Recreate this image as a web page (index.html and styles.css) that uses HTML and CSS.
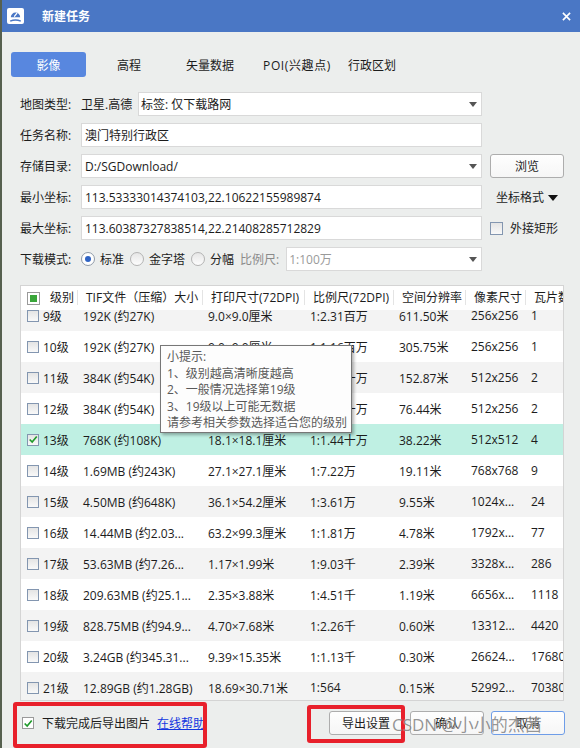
FILE: index.html
```html
<!DOCTYPE html>
<html>
<head>
  <meta charset="utf-8">
  <title>新建任务</title>
  <link rel="stylesheet" href="styles.css">
</head>
<body>
  <div class="window">
    <div class="titlebar">
      <svg class="app-icon" viewBox="0 0 17 16">
        <rect x="0" y="0" width="17" height="16" rx="2" fill="#fff"/>
        <path d="M3.8 9.2 a4.7 4.7 0 0 1 9.4 0 z" fill="#4a77c5"/>
        <path d="M7.6 8.2 L9.8 5.4" stroke="#fff" stroke-width="1.3" stroke-linecap="round"/>
        <path d="M3.2 13.2 Q8.5 10.6 13.8 13.2" stroke="#4a77c5" stroke-width="1.5" fill="none"/>
      </svg>
      <span class="title">新建任务</span>
      <svg class="close" viewBox="0 0 10 10">
        <path d="M1 1 L9 9 M9 1 L1 9" stroke="#fff" stroke-width="1.8"/>
      </svg>
    </div>

    <div class="tabs">
      <div class="tab active">影像</div>
      <div class="tab">高程</div>
      <div class="tab">矢量数据</div>
      <div class="tab poi">POI(兴趣点)</div>
      <div class="tab">行政区划</div>
    </div>

    <div class="form">
      <label>地图类型:</label>
      <div class="pair">
        <span class="map-type">卫星.高德</span>
        <div class="box select tight">标签: 仅下载路网<i class="caret"></i></div>
      </div>
      <div></div>

      <label>任务名称:</label>
      <div class="box">澳门特别行政区</div>
      <div></div>

      <label>存储目录:</label>
      <div class="box select">D:/SGDownload/<i class="caret"></i></div>
      <div class="side"><button class="btn">浏览</button></div>

      <label>最小坐标:</label>
      <div class="box">113.53333014374103,22.10622155989874</div>
      <div class="side"><span class="coord-fmt">坐标格式<i class="caret dark"></i></span></div>

      <label>最大坐标:</label>
      <div class="box">113.60387327838514,22.21408285712829</div>
      <div class="side"><span class="check"></span><span class="check-label">外接矩形</span></div>

      <label>下载模式:</label>
      <div class="pair modes">
        <span class="radio on"></span><span class="radio-label">标准</span>
        <span class="radio"></span><span class="radio-label">金字塔</span>
        <span class="radio"></span><span class="radio-label">分幅</span>
        <span class="muted">比例尺:</span>
        <div class="box select scale">1:100万<i class="caret"></i></div>
      </div>
      <div></div>
    </div>

    <div class="table">
      <div class="row head">
        <div class="cell th level"><span class="check partial"><i></i></span><span class="lvl-head">级别</span></div>
        <div class="cell th">TIF文件（压缩）大小</div>
        <div class="cell th">打印尺寸(72DPI)</div>
        <div class="cell th">比例尺(72DPI)</div>
        <div class="cell th">空间分辨率</div>
        <div class="cell th">像素尺寸</div>
        <div class="cell th">瓦片数</div>
      </div>
      <div class="body">
        <div class="rows">
          <div class="row odd"><div class="cell level"><span class="check"></span>9级</div><div class="cell">192K (约27K)</div><div class="cell">9.0×9.0厘米</div><div class="cell">1:2.31百万</div><div class="cell">611.50米</div><div class="cell">256x256</div><div class="cell">1</div></div>
          <div class="row"><div class="cell level"><span class="check"></span>10级</div><div class="cell">192K (约27K)</div><div class="cell">9.0×9.0厘米</div><div class="cell">1:1.16百万</div><div class="cell">305.75米</div><div class="cell">256x256</div><div class="cell">1</div></div>
          <div class="row odd"><div class="cell level"><span class="check"></span>11级</div><div class="cell">384K (约54K)</div><div class="cell">18.1×9.0厘米</div><div class="cell">1:5.78十万</div><div class="cell">152.87米</div><div class="cell">512x256</div><div class="cell">2</div></div>
          <div class="row"><div class="cell level"><span class="check"></span>12级</div><div class="cell">384K (约54K)</div><div class="cell">18.1×9.0厘米</div><div class="cell">1:2.89十万</div><div class="cell">76.44米</div><div class="cell">512x256</div><div class="cell">2</div></div>
          <div class="row picked"><div class="cell level"><span class="check"><svg viewBox="0 0 12 12"><path d="M2 6 L5 9 L10.5 2.5" stroke="#1f9a2a" stroke-width="2" fill="none"/></svg></span>13级</div><div class="cell">768K (约108K)</div><div class="cell">18.1×18.1厘米</div><div class="cell">1:1.44十万</div><div class="cell">38.22米</div><div class="cell">512x512</div><div class="cell">4</div></div>
          <div class="row"><div class="cell level"><span class="check"></span>14级</div><div class="cell">1.69MB (约243K)</div><div class="cell">27.1×27.1厘米</div><div class="cell">1:7.22万</div><div class="cell">19.11米</div><div class="cell">768x768</div><div class="cell">9</div></div>
          <div class="row odd"><div class="cell level"><span class="check"></span>15级</div><div class="cell">4.50MB (约648K)</div><div class="cell">36.1×54.2厘米</div><div class="cell">1:3.61万</div><div class="cell">9.55米</div><div class="cell">1024x...</div><div class="cell">24</div></div>
          <div class="row"><div class="cell level"><span class="check"></span>16级</div><div class="cell">14.44MB (约2.03...</div><div class="cell">63.2×99.3厘米</div><div class="cell">1:1.81万</div><div class="cell">4.78米</div><div class="cell">1792x...</div><div class="cell">77</div></div>
          <div class="row odd"><div class="cell level"><span class="check"></span>17级</div><div class="cell">53.63MB (约7.26...</div><div class="cell">1.17×1.99米</div><div class="cell">1:9.03千</div><div class="cell">2.39米</div><div class="cell">3328x...</div><div class="cell">286</div></div>
          <div class="row"><div class="cell level"><span class="check"></span>18级</div><div class="cell">209.63MB (约25.1...</div><div class="cell">2.35×3.88米</div><div class="cell">1:4.51千</div><div class="cell">1.19米</div><div class="cell">6656x...</div><div class="cell">1118</div></div>
          <div class="row odd"><div class="cell level"><span class="check"></span>19级</div><div class="cell">828.75MB (约94.9...</div><div class="cell">4.70×7.68米</div><div class="cell">1:2.26千</div><div class="cell">0.60米</div><div class="cell">13312...</div><div class="cell">4420</div></div>
          <div class="row"><div class="cell level"><span class="check"></span>20级</div><div class="cell">3.24GB (约345.31...</div><div class="cell">9.39×15.35米</div><div class="cell">1:1.13千</div><div class="cell">0.30米</div><div class="cell">26624...</div><div class="cell">17680</div></div>
          <div class="row odd"><div class="cell level"><span class="check"></span>21级</div><div class="cell">12.89GB (约1.28GB)</div><div class="cell">18.69×30.71米</div><div class="cell">1:564</div><div class="cell">0.15米</div><div class="cell">52992...</div><div class="cell">70380</div></div>
        </div>
      </div>
      <div class="tooltip">
        小提示:<br>
        1、级别越高清晰度越高<br>
        2、一般情况选择第19级<br>
        3、19级以上可能无数据<br>
        请参考相关参数选择适合您的级别
      </div>
    </div>

    <div class="footer">
      <span class="check on"><svg viewBox="0 0 12 12"><path d="M2 6 L5 9 L10.5 2.5" stroke="#1f9a2a" stroke-width="2" fill="none"/></svg></span>
      <span class="export-label">下载完成后导出图片</span>
      <a class="help" href="#">在线帮助</a>
      <div class="actions">
        <button class="btn">导出设置</button>
        <button class="btn">确认</button>
        <button class="btn default">取消</button>
      </div>
      <div class="mark mark-left"></div>
      <div class="mark mark-right"></div>
      <div class="watermark">CSDN @小小的杰茜</div>
    </div>
  </div>
</body>
</html>
```

FILE: styles.css
```css
* {
  box-sizing: border-box;
}

html, body {
  margin: 0;
}

body {
  background: #56604f;
  font-family: "Open Sans", "Noto Sans CJK SC", sans-serif;
  font-size: 12px;
  color: #1c1c1c;
}

.window {
  margin-left: 2px;
  height: 748px;
  background: #eceeed;
  position: relative;
  overflow: hidden;
}

.titlebar {
  height: 32px;
  background: #4a77c5;
  display: flex;
  align-items: center;
  color: #fff;
}

.app-icon {
  width: 17px;
  height: 16px;
  margin-left: 5px;
}

.title {
  margin-left: 18px;
  font-weight: bold;
}

.close {
  width: 9px;
  height: 9px;
  margin-left: auto;
  margin-right: 9px;
}

.tabs {
  display: grid;
  grid-template-columns: 75px 86px 76px 98px 52px;
  height: 25px;
  margin: 20px 0 0 9px;
}

.tab {
  display: flex;
  align-items: center;
  justify-content: center;
  white-space: nowrap;
}

.tab.poi {
  letter-spacing: 0.6px;
}

.tab.active {
  background: #5887df;
  color: #fff;
  border-radius: 3px;
}

.form {
  display: grid;
  grid-template-columns: 61px 401px 90px;
  grid-auto-rows: 24px;
  row-gap: 7px;
  align-items: center;
  margin-top: 15px;
  padding-left: 18px;
}

.form label {
  white-space: nowrap;
}

.pair {
  display: flex;
  align-items: center;
  height: 24px;
}

.map-type {
  width: 57px;
}

.box {
  height: 24px;
  background: #fff;
  border: 1px solid #d9d9d9;
  display: flex;
  align-items: center;
  padding-left: 3px;
  white-space: nowrap;
  position: relative;
  flex: 1;
}

.box.tight {
  padding-left: 2px;
}

.caret {
  position: absolute;
  right: 4px;
  top: 9px;
  border-left: 4px solid transparent;
  border-right: 4px solid transparent;
  border-top: 5px solid #555;
}

.side {
  display: flex;
  align-items: center;
  padding-left: 8px;
}

.btn {
  width: 74px;
  height: 24px;
  border: 1px solid #adadad;
  border-radius: 3px;
  background: linear-gradient(#fefefe, #f6f6f6);
  font: inherit;
  color: #1c1c1c;
  padding: 0;
}

.btn.default {
  border-color: #6e9de8;
}

.coord-fmt {
  margin-left: 6px;
  position: relative;
  padding-right: 14px;
}

.caret.dark {
  right: 0;
  top: 7px;
  border-left-width: 5px;
  border-right-width: 5px;
  border-top: 6px solid #111;
}

.check {
  display: inline-flex;
  align-items: center;
  justify-content: center;
  width: 12px;
  height: 12px;
  border: 1px solid #8396b0;
  background: linear-gradient(#e4e4e4, #f9f9f9);
  flex: none;
}

.check svg {
  width: 11px;
  height: 11px;
}

.side .check {
  width: 13px;
  height: 13px;
}

.check-label {
  margin-left: 7px;
}

.modes .radio {
  width: 14px;
  height: 14px;
  border-radius: 50%;
  border: 1px solid #b3b3b3;
  background: linear-gradient(#e6e6e6, #fdfdfd);
  display: inline-flex;
  align-items: center;
  justify-content: center;
  flex: none;
}

.modes .radio.on {
  border-color: #8f9aa8;
  background: #fff;
}

.modes .radio.on::after {
  content: "";
  width: 6px;
  height: 6px;
  border-radius: 50%;
  background: #2f63c4;
}

.radio-label {
  margin: 0 6px 0 5px;
}

.muted {
  color: #8a8a8a;
  margin: 0 7px 0 0;
}

.box.scale {
  color: #9a9a9a;
  padding-left: 2px;
}

/* level table */
.table {
  position: relative;
  margin: 14px 0 0 18px;
  width: 544px;
  height: 416px;
  border: 1px solid #d4d4d4;
  background: #fff;
  overflow: hidden;
}

.row {
  display: grid;
  grid-template-columns: 58px 125px 102px 89px 72px 60px 60px;
  width: 566px;
  height: 31px;
  align-items: center;
}

.row.odd {
  background: #f3f3f3;
}

.row.picked {
  background: #bff0e3;
}

.row.head {
  height: 24px;
  background: #fff;
  position: relative;
  z-index: 1;
}

.cell {
  padding-left: 4px;
  white-space: nowrap;
  overflow: hidden;
}

.cell.level {
  display: flex;
  align-items: center;
  padding-left: 6px;
}

.cell.level .check {
  margin-right: 4px;
}

.th {
  position: relative;
  padding-left: 7px;
  height: 24px;
  line-height: 24px;
}

.th::after {
  content: "";
  position: absolute;
  right: 1px;
  top: 4px;
  bottom: 5px;
  border-right: 1px solid #e4e4e4;
}

.th.level {
  padding-left: 6px;
}

.check.partial {
  width: 13px;
  height: 13px;
  background: #fff;
  border-color: #9a9a9a;
}

.check.partial i {
  width: 7px;
  height: 7px;
  background: #3aa63a;
}

.lvl-head {
  margin-left: 6px;
}

.body {
  height: 390px;
  overflow: hidden;
}

.rows {
  margin-top: -10px;
}

.tooltip {
  position: absolute;
  left: 139px;
  top: 59px;
  width: 192px;
  height: 88px;
  padding: 3px 6px;
  border: 1px solid #777;
  background: #fdfdfd;
  color: #595959;
  line-height: 16.5px;
  white-space: nowrap;
  box-shadow: 2px 2px 3px rgba(0, 0, 0, 0.3);
  z-index: 2;
}

/* bottom bar */
.footer {
  position: relative;
  display: flex;
  align-items: center;
  height: 47px;
  padding: 10px 15px 13px 20px;
}

.footer .check.on {
  width: 12px;
  height: 12px;
  background: #fff;
  border-color: #9a9a9a;
}

.export-label {
  margin-left: 8px;
}

.help {
  margin-left: 7px;
  color: #1237e0;
}

.actions {
  margin-left: auto;
  display: flex;
  gap: 7px;
}

.mark {
  position: absolute;
  border: 4px solid #e8202b;
  border-radius: 3px;
}

.mark-left {
  left: 11px;
  top: 1px;
  width: 194px;
  height: 46px;
}

.mark-right {
  left: 305px;
  top: 4px;
  width: 98px;
  height: 38px;
}

.watermark {
  position: absolute;
  left: 390px;
  top: 14px;
  font-size: 17px;
  line-height: 20px;
  color: rgba(80, 80, 80, 0.62);
  text-shadow: 0 0 1px rgba(255, 255, 255, 0.8);
  white-space: nowrap;
}
```
